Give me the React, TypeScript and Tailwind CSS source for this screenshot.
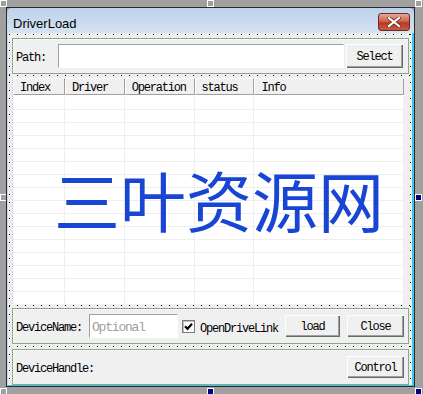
import React from "react"

const mono = "font-['Liberation_Mono',monospace] text-[12px] tracking-[-1.2px] leading-none"

const columns = [
  { name: "Index", w: "w-[52px]" },
  { name: "Driver", w: "w-[60px]" },
  { name: "Operation", w: "w-[70px]" },
  { name: "status", w: "w-[60px]" },
  { name: "Info", w: "w-[150px]" },
]

function Button({ label, w, h }: { label: string; w: string; h: string }) {
  return (
    <div
      className={`${w} ${h} ${mono} text-black pt-[2px] flex items-center justify-center bg-[#f0f0f0] shadow-[inset_1px_1px_0_#ffffff,inset_-1px_-1px_0_#696969,inset_-2px_-2px_0_#a0a0a0]`}
    >
      {label}
    </div>
  )
}

function Edit({ w, h, placeholder }: { w: string; h: string; placeholder?: string }) {
  return (
    <div
      className={`${w} ${h} bg-white border-t border-l border-[#a0a0a0] border-b-[#ffffff] border-r-[#ffffff] border-b border-r flex items-center pl-[2px] pt-[2px]`}
    >
      {placeholder && <span className={`${mono} text-[#a0a0a0] text-[13px] tracking-[-0.8px]`}>{placeholder}</span>}
    </div>
  )
}

function Label({ text, w }: { text: string; w?: string }) {
  return <span className={`${mono} text-black pt-[3px] ${w ?? ""}`}>{text}</span>
}

function Group({ children }: { children: React.ReactNode }) {
  return (
    <div className="w-[397px] h-[36px] shrink-0 border border-[#8aa98a] shadow-[inset_1px_1px_0_#ffffff] flex items-center pl-[3px] pr-[4px]">
      {children}
    </div>
  )
}

function Handle({ pos, filled }: { pos: string; filled?: boolean }) {
  return (
    <div
      className={`absolute ${pos} w-[7px] h-[7px] border border-white ${filled ? "bg-[#000080]" : "bg-transparent"}`}
    />
  )
}

const dotsH = "absolute h-px bg-[repeating-linear-gradient(to_right,#000_0_1px,transparent_1px_8px)]"
const dotsV = "absolute w-px bg-[repeating-linear-gradient(to_bottom,#000_0_1px,transparent_1px_8px)]"

export default function App() {
  return (
    <div className="relative w-[423px] h-[394px] bg-[#a0a0a0] overflow-hidden">
      {/* resize handles of the dialog */}
      <Handle pos="left-0 top-0" />
      <Handle pos="left-[207px] top-0" />
      <Handle pos="left-[415px] top-0" />
      <Handle pos="left-0 top-[194px]" />
      <Handle pos="left-[415px] top-[194px]" filled />
      <Handle pos="left-0 top-[388px]" />
      <Handle pos="left-[207px] top-[388px]" filled />
      <Handle pos="left-[415px] top-[388px]" filled />

      {/* dialog window */}
      <div className="absolute left-[6px] top-[7px] w-[409px] h-[380px] border border-[#2a2a2a] flex flex-col">
        <div className="h-[25px] shrink-0 rounded-t-[5px] bg-[linear-gradient(to_bottom,#bcd1ea,#d6e3f3)] flex items-start justify-between pl-[6px] pr-[4px]">
          <span className="font-['Liberation_Sans',sans-serif] text-[13px] leading-none text-black pt-[9px]">DriverLoad</span>
          <div className="mt-[5px] w-[32px] h-[18px] rounded-[3px] border border-[#6b2a22] bg-[linear-gradient(to_bottom,#e9a796,#d0644e_45%,#b83a26_55%,#c75a40)] flex items-center justify-center">
            <svg width="14" height="10" viewBox="0 0 14 10">
              <path d="M2 1 L12 9 M12 1 L2 9" stroke="#5a2a22" strokeWidth="3.6" strokeLinecap="square" />
              <path d="M2 1 L12 9 M12 1 L2 9" stroke="#ffffff" strokeWidth="2.2" strokeLinecap="square" />
            </svg>
          </div>
        </div>

        <div className="relative flex-1 bg-[#f0f0f0] border-l border-l-[#c9dbef] border-r-2 border-r-[#3ec6e8] border-b border-b-[#3ec6e8] pl-[4px] pt-[5px] flex flex-col">
          {/* layout guides */}
          <div className={`${dotsH} left-[1px] top-[1px] w-[402px]`} />
          <div className={`${dotsH} left-[1px] top-[42px] w-[402px]`} />
          <div className={`${dotsH} left-[1px] top-[272px] w-[402px]`} />
          <div className={`${dotsH} left-[1px] top-[313px] w-[402px]`} />
          <div className={`${dotsV} left-[1px] top-[1px] h-[350px]`} />
          <div className={`${dotsV} left-[402px] top-[1px] h-[350px]`} />

          <Group>
            <Label text="Path:" w="w-[42px]" />
            <Edit w="w-[286px]" h="h-[24px]" />
            <div className="ml-[2px]">
              <Button label="Select" w="w-[57px]" h="h-[24px]" />
            </div>
          </Group>

          <div className="relative shrink-0 mt-[4px] w-[392px] h-[226px] bg-white border-l border-[#dadada] overflow-hidden">
            <div className="flex h-[17px]">
              {columns.map((c) => (
                <div
                  key={c.name}
                  className={`${c.w} h-full bg-[#f0f0f0] border-t border-l border-white border-r-[#a0a0a0] border-b-[#a0a0a0] border-r border-b flex items-center pl-[6px] pt-[3px] text-black ${mono}`}
                >
                  {c.name}
                </div>
              ))}
            </div>
            <div className="h-[2px]" />
            {Array.from({ length: 16 }).map((_, i) => (
              <div key={i} className="flex h-[13px]">
                {columns.map((c) => (
                  <div key={c.name} className={`${c.w} h-full border-r border-b border-[#eeeeee]`} />
                ))}
              </div>
            ))}
            <div className="absolute left-[41px] top-[87px] font-['Noto_Sans_CJK_SC',sans-serif] text-[66px] leading-none text-[#1845d4] whitespace-nowrap">
              三叶资源网
            </div>
          </div>

          <div className="mt-[4px]">
            <Group>
              <Label text="DeviceName:" w="w-[73px]" />
              <Edit w="w-[89px]" h="h-[24px]" placeholder="Optional" />
              <div className="ml-[4px] w-[13px] h-[13px] bg-white border border-[#7a7a7a] shadow-[inset_1px_1px_0_#c0c0c0] flex items-center justify-center">
                <svg width="9" height="9" viewBox="0 0 9 9">
                  <path d="M1 4.3 L3.5 6.8 L8 1.8" stroke="#000" strokeWidth="2.2" fill="none" />
                </svg>
              </div>
              <span className="ml-[5px]">
                <Label text="OpenDriveLink" />
              </span>
              <div className="ml-auto">
                <Button label="load" w="w-[55px]" h="h-[22px]" />
              </div>
              <div className="ml-[7px]">
                <Button label="Close" w="w-[57px]" h="h-[22px]" />
              </div>
            </Group>
          </div>

          <div className="mt-[5px]">
            <Group>
              <Label text="DeviceHandle:" />
              <div className="ml-auto">
                <Button label="Control" w="w-[57px]" h="h-[22px]" />
              </div>
            </Group>
          </div>
        </div>
      </div>
    </div>
  )
}
